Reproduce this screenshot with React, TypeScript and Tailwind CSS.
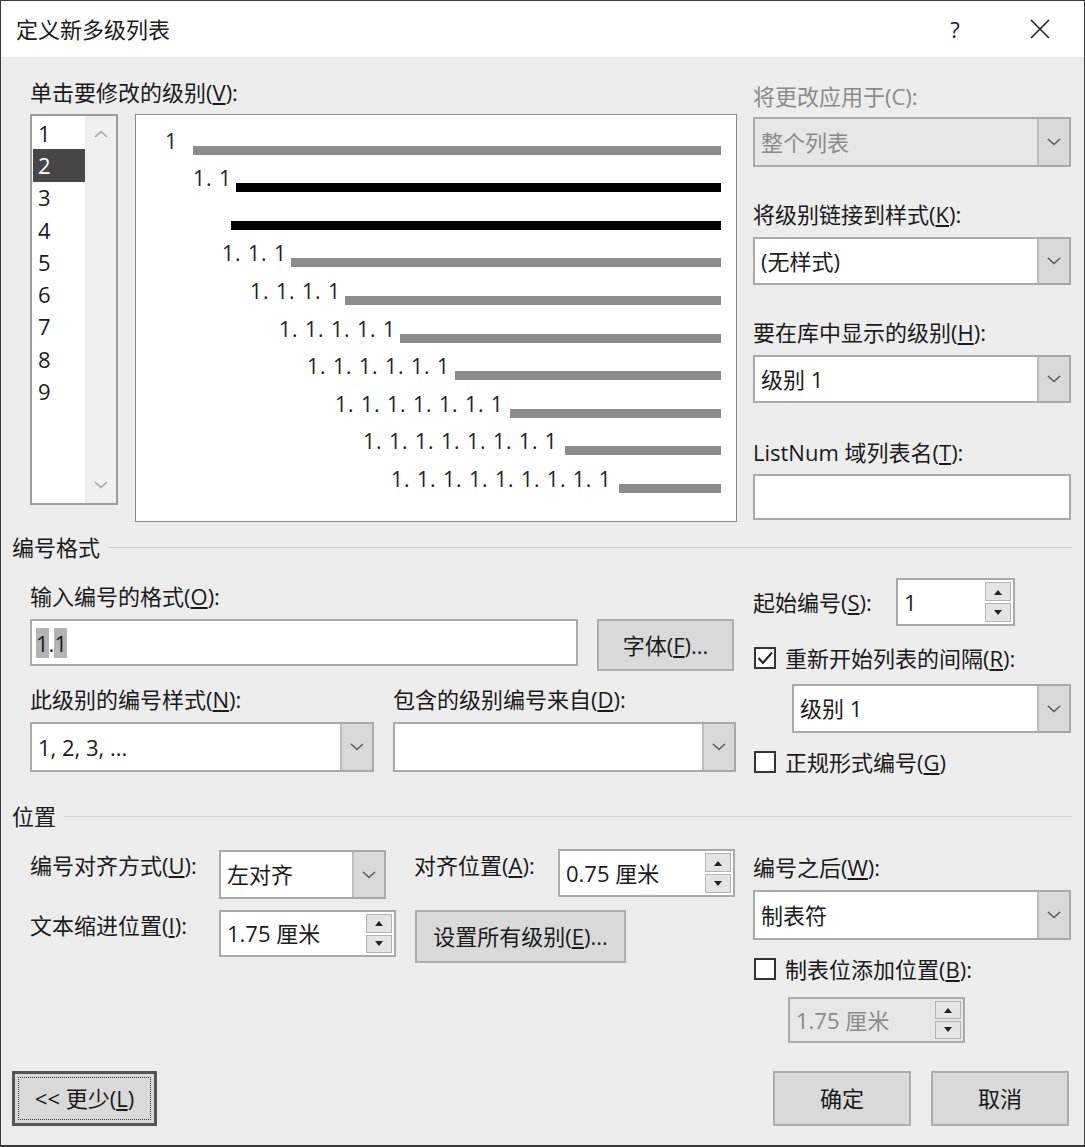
import React from "react";

// 定义新多级列表 — Word dialog

const previewRows = [
  { label: "1", lead: "w-[57px] pl-[29px]", bar: "bg-[#8c8c8c]" },
  { label: "1. 1", lead: "w-[100px] pl-[57px]", bar: "bg-black" },
  { label: "", lead: "w-[95px] pl-[95px]", bar: "bg-black" },
  { label: "1. 1. 1", lead: "w-[155px] pl-[86px]", bar: "bg-[#8c8c8c]" },
  { label: "1. 1. 1. 1", lead: "w-[209px] pl-[114px]", bar: "bg-[#8c8c8c]" },
  { label: "1. 1. 1. 1. 1", lead: "w-[264px] pl-[143px]", bar: "bg-[#8c8c8c]" },
  { label: "1. 1. 1. 1. 1. 1", lead: "w-[319px] pl-[171px]", bar: "bg-[#8c8c8c]" },
  { label: "1. 1. 1. 1. 1. 1. 1", lead: "w-[374px] pl-[199px]", bar: "bg-[#8c8c8c]" },
  { label: "1. 1. 1. 1. 1. 1. 1. 1", lead: "w-[429px] pl-[227px]", bar: "bg-[#8c8c8c]" },
  { label: "1. 1. 1. 1. 1. 1. 1. 1. 1", lead: "w-[483px] pl-[255px]", bar: "bg-[#8c8c8c]" },
];

function Chevron({ up, color = "#5c5c5c" }: { up?: boolean; color?: string }) {
  return (
    <svg width="14" height="8" viewBox="0 0 14 8">
      <path d={up ? "M1 7 L7 1.5 L13 7" : "M1 1 L7 6.5 L13 1"} fill="none" stroke={color} strokeWidth="1.6" />
    </svg>
  );
}

function Tri({ up }: { up?: boolean }) {
  return (
    <svg width="10" height="6" viewBox="0 0 10 6">
      <path d={up ? "M1 6 L5 1 L9 6 Z" : "M1 0 L5 5 L9 0 Z"} fill="#222" />
    </svg>
  );
}

function Label({ children, muted, className = "" }: { children: React.ReactNode; muted?: boolean; className?: string }) {
  return (
    <div className={`h-[24px] leading-[24px] text-[22px] whitespace-nowrap ${muted ? "text-[#8b8b8b]" : "text-[#1a1a1a]"} ${className}`}>
      {children}
    </div>
  );
}

function Combo({ value, className = "", disabled }: { value?: string; className?: string; disabled?: boolean }) {
  return (
    <div className={`flex border-2 border-[#a9a9a9] ${disabled ? "bg-[#e6e6e6] text-[#8b8b8b]" : "bg-white text-[#1a1a1a]"} ${className}`}>
      <div className="flex-1 flex items-center pl-[6px] text-[22px] whitespace-nowrap">{value}</div>
      <div className="w-[32px] flex items-center justify-center bg-[#d9d9d9] border-l-2 border-[#bdbdbd]">
        <Chevron />
      </div>
    </div>
  );
}

function Spin({ value, className = "", disabled }: { value: string; className?: string; disabled?: boolean }) {
  return (
    <div className={`flex border-2 border-[#a9a9a9] ${disabled ? "bg-[#e6e6e6] text-[#8b8b8b]" : "bg-white text-[#1a1a1a]"} ${className}`}>
      <div className="flex-1 flex items-center pl-[6px] text-[22px] whitespace-nowrap">{value}</div>
      <div className="w-[30px] flex flex-col p-[2px] gap-[2px]">
        <div className="flex-1 flex items-center justify-center bg-[#e4e4e4] border border-[#b3b3b3]">
          <Tri up />
        </div>
        <div className="flex-1 flex items-center justify-center bg-[#e4e4e4] border border-[#b3b3b3]">
          <Tri />
        </div>
      </div>
    </div>
  );
}

function Check({ checked }: { checked?: boolean }) {
  return (
    <div className="w-[22px] h-[22px] border-2 border-[#333] bg-white flex items-center justify-center shrink-0">
      {checked && (
        <svg width="18" height="18" viewBox="0 0 18 18">
          <path d="M2.5 9 L7 14 L16 3.5" fill="none" stroke="#222" strokeWidth="2" />
        </svg>
      )}
    </div>
  );
}

function Btn({ children, className = "" }: { children: React.ReactNode; className?: string }) {
  return (
    <div className={`flex items-center justify-center bg-[#d9d9d9] border-2 border-[#adadad] text-[22px] text-[#1a1a1a] whitespace-nowrap ${className}`}>
      {children}
    </div>
  );
}

function SectionHead({ title, className = "" }: { title: string; className?: string }) {
  return (
    <div className={`flex items-center h-[24px] pl-[11px] pr-[12px] ${className}`}>
      <span className="text-[22px] leading-[24px] text-[#1a1a1a]">{title}</span>
      <div className="flex-1 h-px bg-[#cdcdcd] ml-[8px]" />
    </div>
  );
}

export default function App() {
  return (
    <div className="w-[1085px] h-[1147px] flex flex-col border border-b-2 border-[#3a3a3a] font-['Open_Sans','Noto_Sans_CJK_SC',sans-serif] text-[#1a1a1a]">
      {/* Title bar */}
      <div className="h-[56px] bg-white flex items-center pl-[15px] pr-[24px] shrink-0">
        <div className="flex-1 text-[22px] leading-none">定义新多级列表</div>
        <div className="w-[40px] text-center text-[22px]">?</div>
        <div className="w-[40px] ml-[45px] flex items-center justify-center">
          <svg width="20" height="20" viewBox="0 0 20 20">
            <path d="M1 1 L19 19 M19 1 L1 19" stroke="#222" strokeWidth="1.6" />
          </svg>
        </div>
      </div>

      {/* Body */}
      <div className="flex-1 bg-[#ececec] flex flex-col">
        {/* Levels + preview + right column */}
        <div className="flex pl-[29px]">
          <div className="flex flex-col pt-[23px]">
            <Label>
              单击要修改的级别(<u>V</u>):
            </Label>
            <div className="flex items-start mt-[10px]">
              <div className="w-[88px] h-[391px] border-2 border-[#9c9c9c] bg-white flex">
                <div className="flex-1 flex flex-col pt-[1px] pl-[1px]">
                  {[1, 2, 3, 4, 5, 6, 7, 8, 9].map((n) => (
                    <div
                      key={n}
                      className={`h-[32.3px] flex items-center pl-[5px] text-[22px] ${n === 2 ? "bg-[#474747] text-white" : ""}`}
                    >
                      {n}
                    </div>
                  ))}
                </div>
                <div className="w-[31px] bg-[#efefef] flex flex-col items-center justify-between py-[14px]">
                  <Chevron up color="#a6a6a6" />
                  <Chevron color="#a6a6a6" />
                </div>
              </div>
              <div className="ml-[17px] w-[602px] h-[408px] border border-[#8a8a8a] bg-white flex flex-col pt-[2px]">
                {previewRows.map((r, i) => (
                  <div key={i} className="h-[37.6px] flex items-end pr-[15px]">
                    <div className={`shrink-0 ${r.lead}`}>
                      <span className="block text-[21px] leading-none tracking-[1px] text-[#222] whitespace-nowrap mb-[3px]">{r.label}</span>
                    </div>
                    <div className={`flex-1 h-[9px] ${r.bar}`} />
                  </div>
                ))}
              </div>
            </div>
          </div>

          <div className="ml-[16px] w-[318px] flex flex-col pt-[27px]">
            <Label muted>将更改应用于(C):</Label>
            <Combo value="整个列表" disabled className="mt-[9px] h-[50px]" />
            <Label className="mt-[35px]">
              将级别链接到样式(<u>K</u>):
            </Label>
            <Combo value="(无样式)" className="mt-[11px] h-[48px]" />
            <Label className="mt-[35px]">
              要在库中显示的级别(<u>H</u>):
            </Label>
            <Combo value="级别 1" className="mt-[11px] h-[48px]" />
            <Label className="mt-[37px]">
              ListNum 域列表名(<u>T</u>):
            </Label>
            <div className="mt-[10px] h-[46px] border-2 border-[#a9a9a9] bg-white" />
          </div>
        </div>

        <SectionHead title="编号格式" className="mt-[13px]" />

        {/* Number format */}
        <div className="flex pl-[29px]">
          <div className="w-[707px] flex flex-col pt-[25px]">
            <Label>
              输入编号的格式(<u>O</u>):
            </Label>
            <div className="flex items-start mt-[11px]">
              <div className="w-[548px] h-[47px] border-2 border-[#a9a9a9] bg-white flex items-center pl-[4px] text-[22px]">
                <span className="bg-[#b4b4b4] leading-[30px]">1</span>
                <span className="leading-[30px]">.</span>
                <span className="bg-[#b4b4b4] leading-[30px]">1</span>
              </div>
              <Btn className="ml-[19px] w-[137px] h-[52px]">
                字体(<u>F</u>)...
              </Btn>
            </div>
            <div className="flex mt-[16px]">
              <Label className="w-[363px]">
                此级别的编号样式(<u>N</u>):
              </Label>
              <Label>
                包含的级别编号来自(<u>D</u>):
              </Label>
            </div>
            <div className="flex mt-[11px]">
              <Combo value="1, 2, 3, ..." className="w-[344px] h-[50px]" />
              <Combo className="ml-[19px] w-[343px] h-[50px]" />
            </div>
          </div>

          <div className="ml-[16px] w-[318px] flex flex-col pt-[19px]">
            <div className="flex items-center h-[48px]">
              <Label className="w-[143px]">
                起始编号(<u>S</u>):
              </Label>
              <Spin value="1" className="w-[119px] h-[48px]" />
            </div>
            <div className="flex items-center h-[22px] mt-[21px] pl-[1px]">
              <Check checked />
              <Label className="ml-[9px]">
                重新开始列表的间隔(<u>R</u>):
              </Label>
            </div>
            <Combo value="级别 1" className="mt-[15px] ml-[39px] h-[49px]" />
            <div className="flex items-center h-[22px] mt-[18px] pl-[1px]">
              <Check />
              <Label className="ml-[9px]">
                正规形式编号(<u>G</u>)
              </Label>
            </div>
          </div>
        </div>

        <SectionHead title="位置" className="mt-[31px]" />

        {/* Position */}
        <div className="flex pl-[29px]">
          <div className="w-[707px] flex flex-col pt-[21px]">
            <div className="flex items-start">
              <Label className="w-[189px] mt-[4px]">
                编号对齐方式(<u>U</u>):
              </Label>
              <Combo value="左对齐" className="w-[167px] h-[49px] mt-[1px]" />
              <Label className="w-[144px] ml-[28px] mt-[4px]">
                对齐位置(<u>A</u>):
              </Label>
              <Spin value="0.75 厘米" className="w-[177px] h-[48px]" />
            </div>
            <div className="flex items-start mt-[11px]">
              <Label className="w-[189px] mt-[3px]">
                文本缩进位置(<u>I</u>):
              </Label>
              <Spin value="1.75 厘米" className="w-[177px] h-[47px]" />
              <Btn className="ml-[19px] w-[211px] h-[53px]">
                设置所有级别(<u>E</u>)...
              </Btn>
            </div>
          </div>

          <div className="ml-[16px] w-[318px] flex flex-col pt-[27px]">
            <Label>
              编号之后(<u>W</u>):
            </Label>
            <Combo value="制表符" className="mt-[11px] h-[50px]" />
            <div className="flex items-center h-[22px] mt-[18px] pl-[1px]">
              <Check />
              <Label className="ml-[9px]">
                制表位添加位置(<u>B</u>):
              </Label>
            </div>
            <Spin value="1.75 厘米" disabled className="mt-[17px] ml-[35px] w-[177px] h-[46px]" />
          </div>
        </div>

        {/* Footer */}
        <div className="flex-1 flex items-end pl-[11px] pr-[15px] pb-[19px]">
          <div className="w-[145px] h-[55px] border-[3px] border-[#555] bg-[#d9d9d9] p-[3px]">
            <div className="w-full h-full border border-dotted border-[#333] flex items-center justify-center text-[22px]">
              &lt;&lt; 更少(<u>L</u>)
            </div>
          </div>
          <div className="flex-1" />
          <Btn className="w-[138px] h-[55px]">确定</Btn>
          <Btn className="ml-[20px] w-[138px] h-[55px]">取消</Btn>
        </div>
      </div>
    </div>
  );
}
